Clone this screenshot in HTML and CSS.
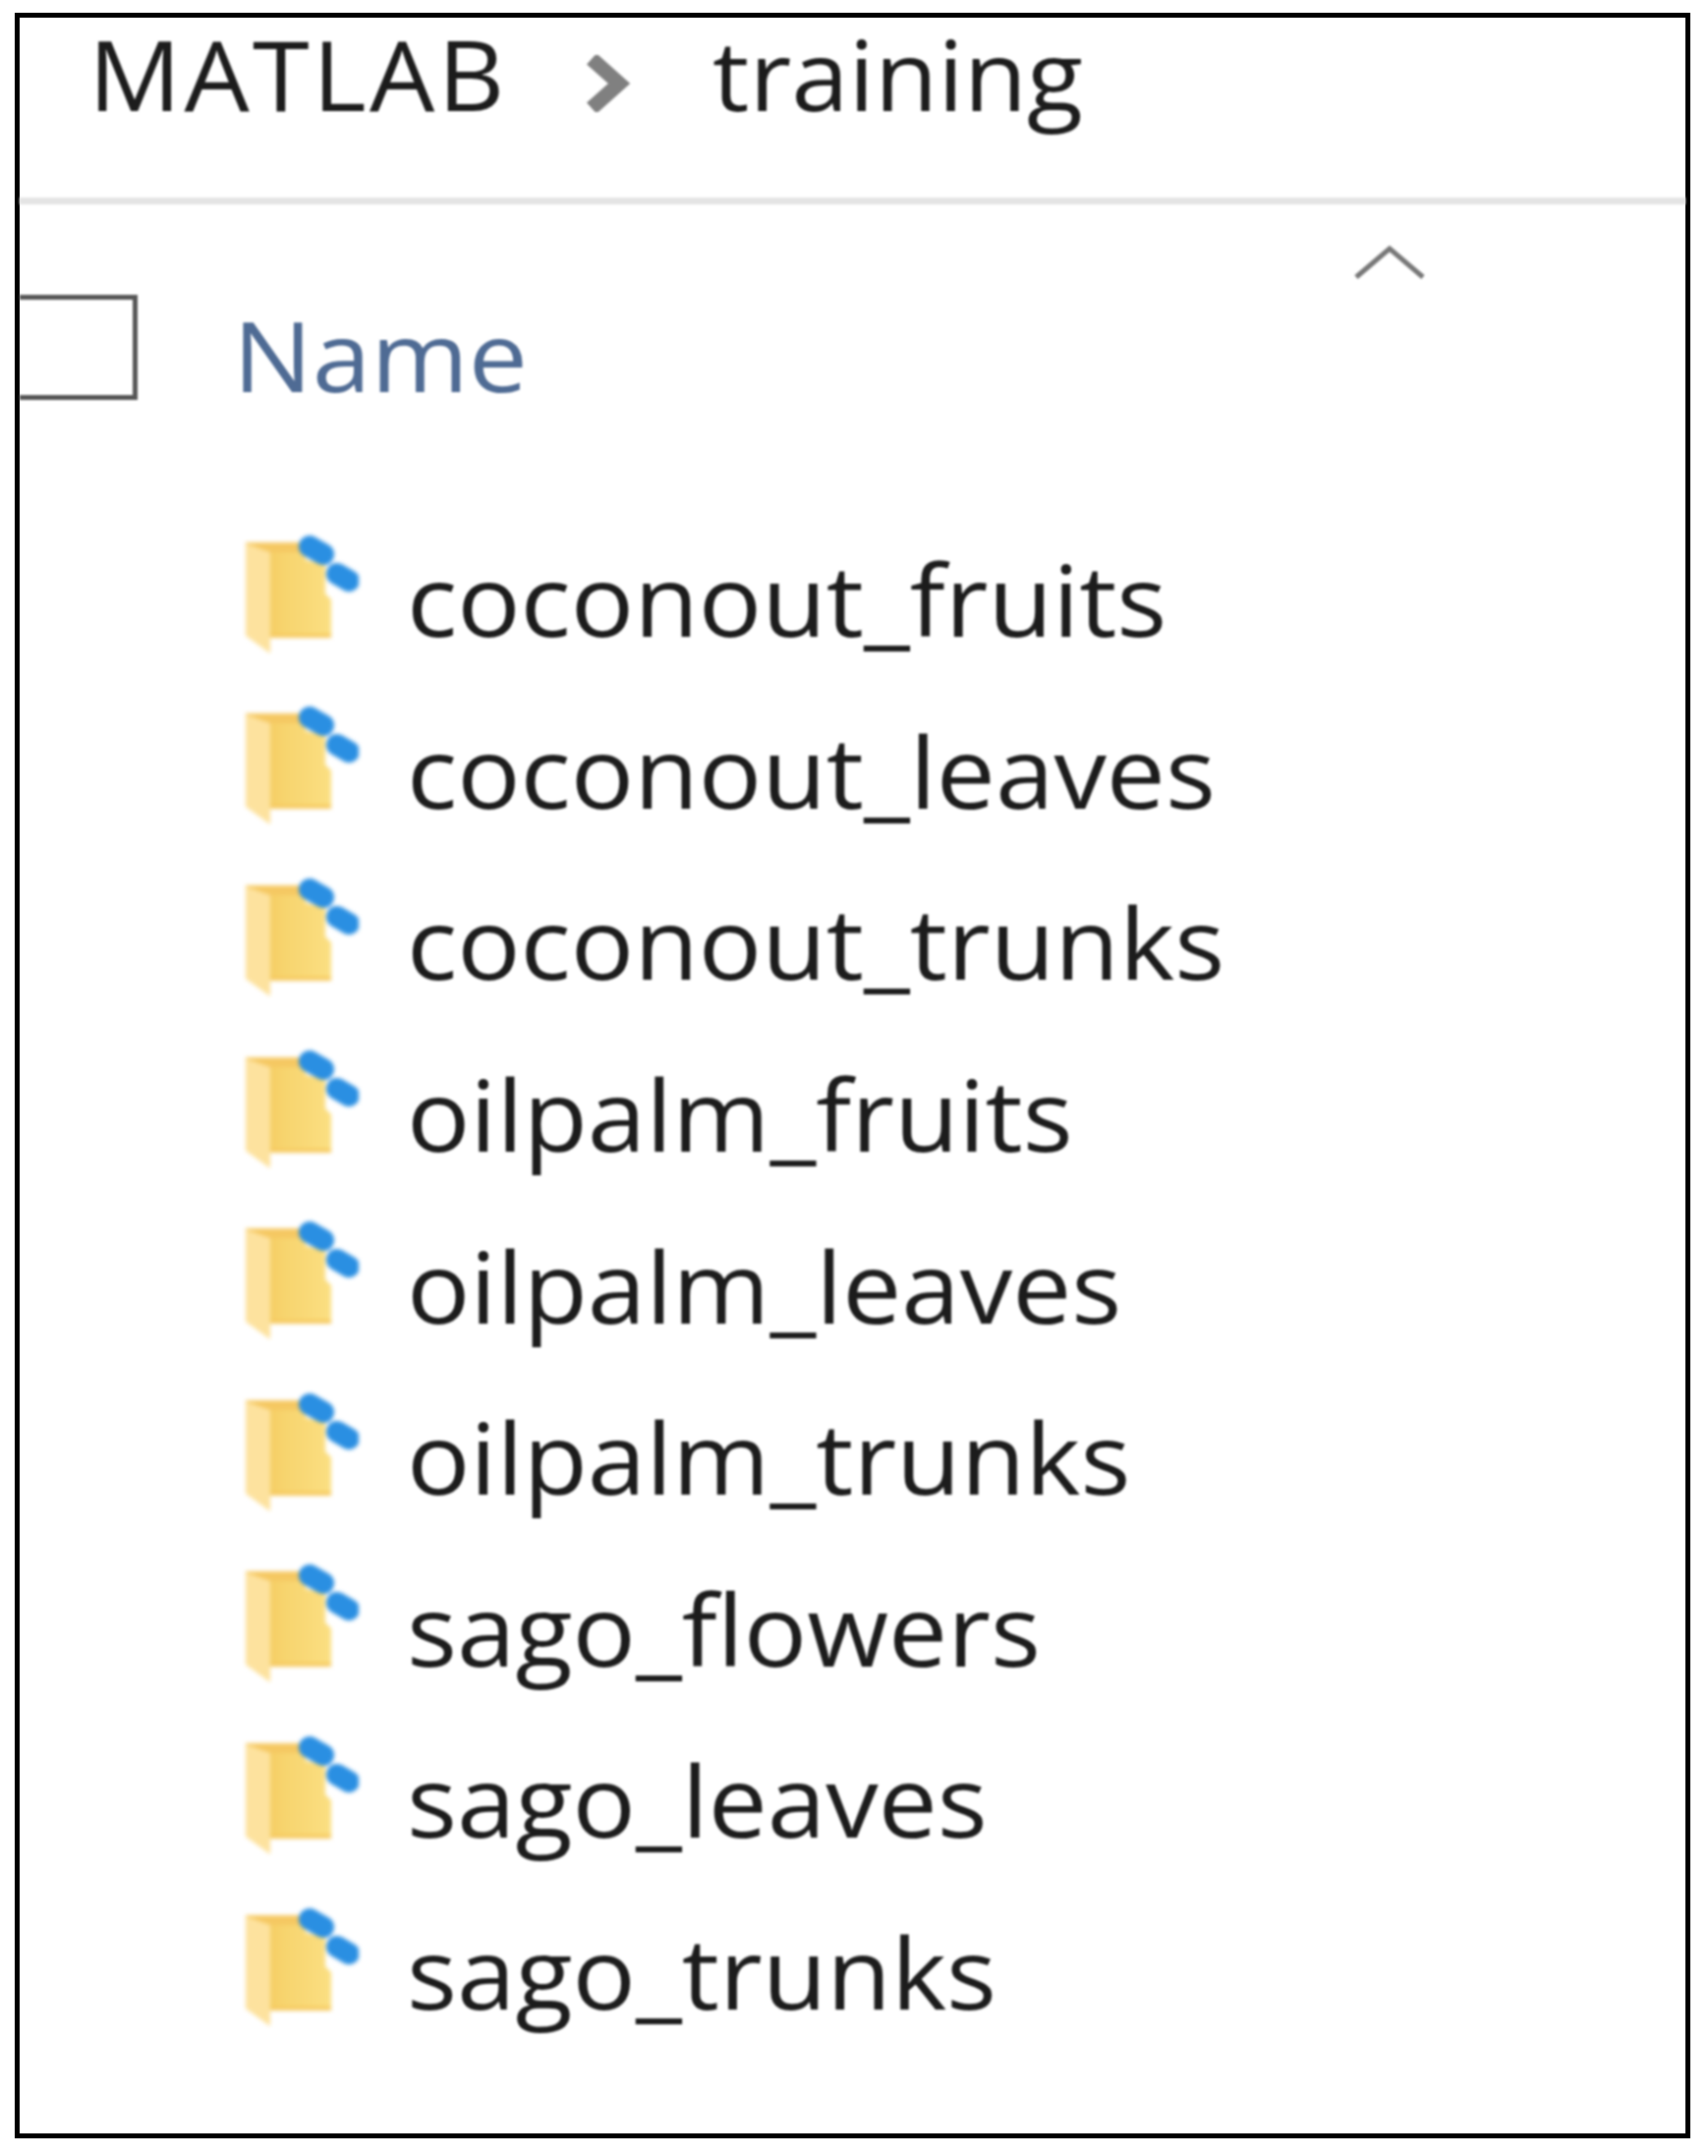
FILE: index.html
```html
<!DOCTYPE html>
<html lang="en">
<head>
  <meta charset="UTF-8" />
  <title>training</title>
  <link rel="stylesheet" href="styles.css">
</head>
<body>
  <svg class="defs" width="0" height="0">
    <defs>
      <linearGradient id="backFill" x1="0" x2="1" y1="0" y2="0">
        <stop offset="0" stop-color="#f2c454"/>
        <stop offset="0.45" stop-color="#f7d46e"/>
        <stop offset="1" stop-color="#fbdf82"/>
      </linearGradient>
      <symbol id="folder" viewBox="0 0 120 125">
        <path d="M5 10H66V28L86 32V62L92 68V107H28V10Z" fill="url(#backFill)"/>
        <path d="M5 10H66V20H5Z" fill="#f5c862"/>
        <path d="M28 103H92V107H28Z" fill="#f6c95f"/>
        <path d="M5 11L30 20V123L5 105Z" fill="#fde29e"/>
        <path d="M70 14L84 22M98 42L110 49" fill="none" stroke="#2a8fe2" stroke-width="22" stroke-linecap="round"/>
      </symbol>
    </defs>
  </svg>

  <div class="frame">
    <div class="crumbs">
      <span class="crumb crumb-root">MATLAB</span>
      <svg class="crumb-sep" viewBox="0 0 48 58"><path d="M8 4L36 29L8 54" fill="none" stroke="#808080" stroke-width="15"/></svg>
      <span class="crumb">training</span>
    </div>

    <div class="head">
      <svg class="sort" viewBox="0 0 72 34"><path d="M2 32L36 3L70 32" fill="none" stroke="#777" stroke-width="5"/></svg>
      <div class="check"></div>
      <span class="name-col">Name</span>
    </div>

    <ul class="list">
      <li class="row"><svg class="folder"><use href="#folder"/></svg><span class="label">coconout_fruits</span></li>
      <li class="row"><svg class="folder"><use href="#folder"/></svg><span class="label">coconout_leaves</span></li>
      <li class="row"><svg class="folder"><use href="#folder"/></svg><span class="label">coconout_trunks</span></li>
      <li class="row"><svg class="folder"><use href="#folder"/></svg><span class="label">oilpalm_fruits</span></li>
      <li class="row"><svg class="folder"><use href="#folder"/></svg><span class="label">oilpalm_leaves</span></li>
      <li class="row"><svg class="folder"><use href="#folder"/></svg><span class="label">oilpalm_trunks</span></li>
      <li class="row"><svg class="folder"><use href="#folder"/></svg><span class="label">sago_flowers</span></li>
      <li class="row"><svg class="folder"><use href="#folder"/></svg><span class="label">sago_leaves</span></li>
      <li class="row"><svg class="folder"><use href="#folder"/></svg><span class="label">sago_trunks</span></li>
    </ul>
  </div>
</body>
</html>
```

FILE: styles.css
```css
body {
  margin: 0;
  background: #fff;
  font-family: "Open Sans", sans-serif;
  color: #1c1c1c;
}

.defs {
  position: absolute;
}

.frame {
  box-sizing: border-box;
  width: 1705px;
  height: 2163px;
  margin: 13px 0 0 15px;
  border: 5px solid #000;
}

.crumbs {
  display: flex;
  align-items: center;
  height: 190px;
  padding-left: 70px;
  padding-bottom: 70px;
  box-sizing: border-box;
  border-bottom: 7px solid #e4e4e4;
  font-size: 98px;
  line-height: 1;
  filter: blur(1.2px);
}

.crumb {
  transform: scaleX(1.07);
  transform-origin: left center;
}

.crumb-root {
  letter-spacing: 3px;
}

.crumb-sep {
  width: 48px;
  height: 58px;
  margin: 20px 83px 0 105px;
}

.head {
  position: relative;
  display: flex;
  align-items: center;
  height: 240px;
  padding-top: 51px;
  box-sizing: border-box;
  filter: blur(1px);
}

.sort {
  position: absolute;
  left: 1358px;
  top: 42px;
  width: 72px;
  height: 34px;
}

.check {
  box-sizing: border-box;
  width: 120px;
  height: 107px;
  border: 5px solid #555;
  border-left: none;
}

.name-col {
  margin: 15px 0 0 97px;
  font-size: 98px;
  color: #4f6b94;
  transform: scaleX(1.095);
  transform-origin: left center;
}

.list {
  list-style: none;
  margin: 0;
  padding: 69px 0 0 225px;
}

.row {
  display: flex;
  align-items: center;
  height: 174.6px;
  font-size: 100px;
}

.folder {
  width: 120px;
  height: 125px;
  margin-right: 49px;
  flex-shrink: 0;
  filter: blur(2px);
}

.label {
  padding-top: 10px;
  transform: scaleX(1.07);
  transform-origin: left center;
  filter: blur(1.2px);
}
```
